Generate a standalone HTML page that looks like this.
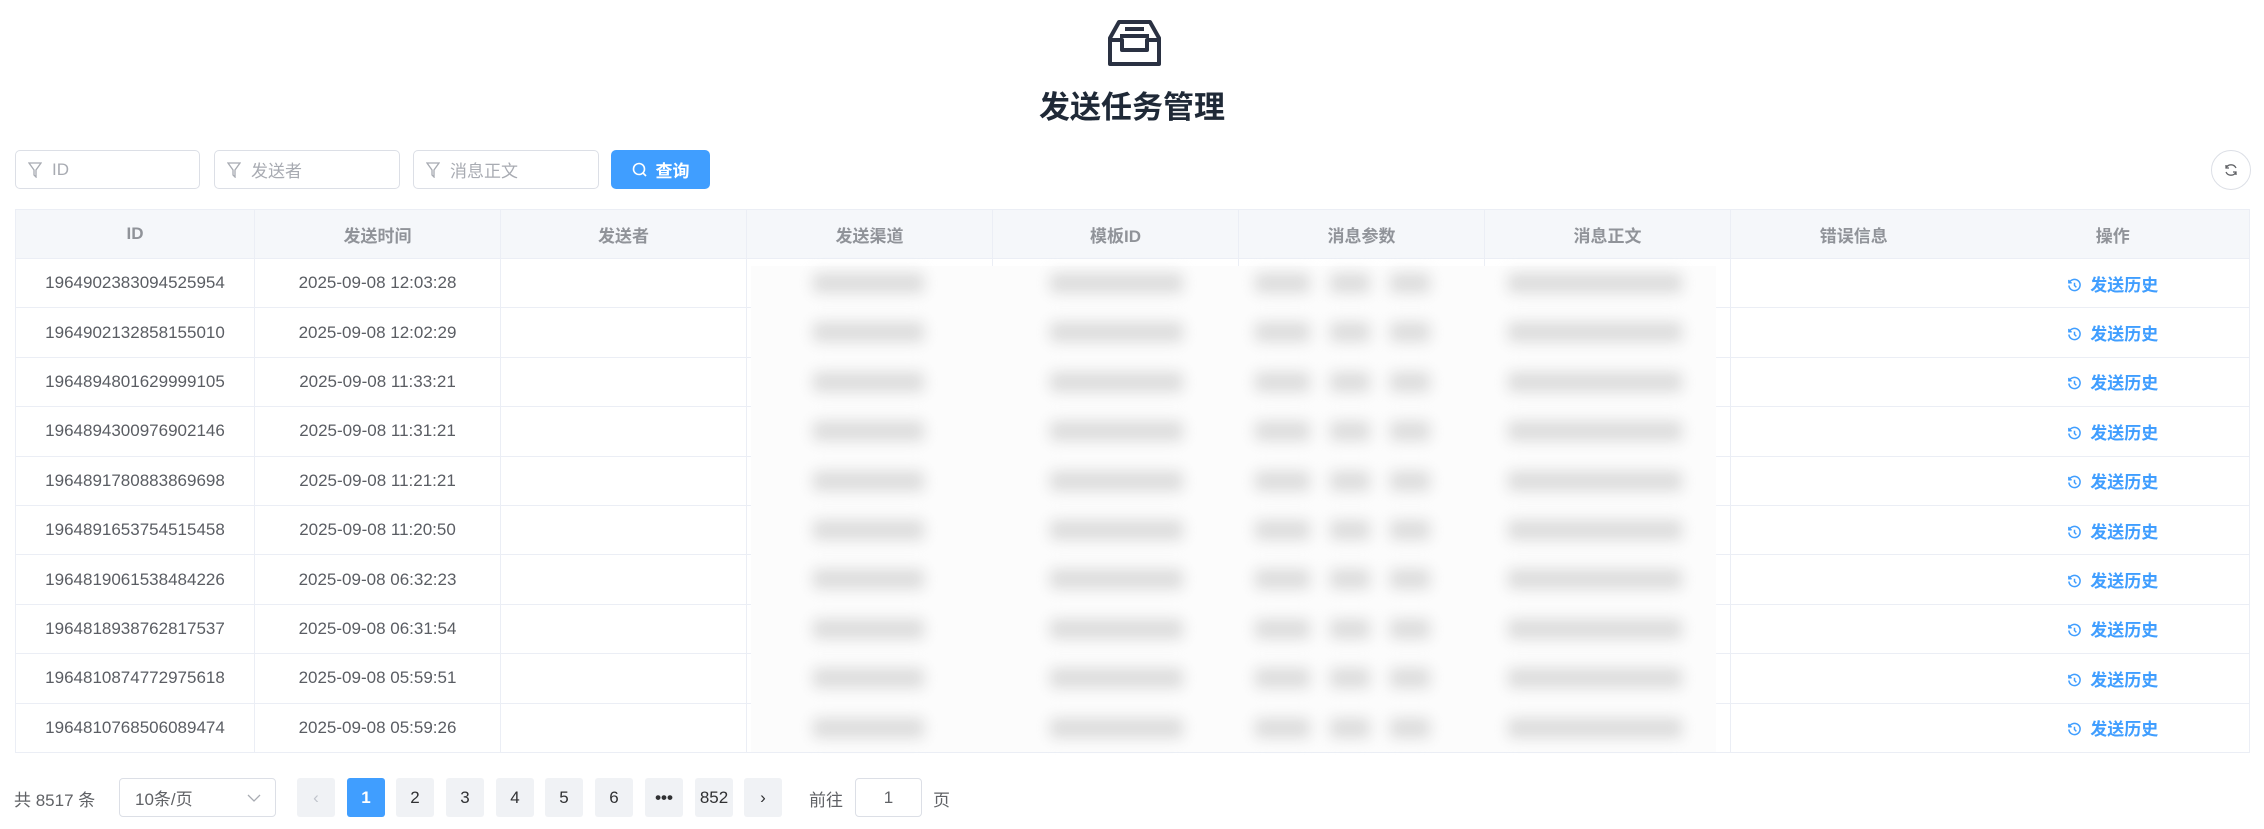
<!DOCTYPE html>
<html><head><meta charset="utf-8"><style>
*{box-sizing:border-box;margin:0;padding:0}
body{width:2264px;height:829px;background:#fff;font-family:"Liberation Sans","Noto Sans CJK SC",sans-serif;color:#606266;position:relative;overflow:hidden}
.abs{position:absolute}
.title{left:0;width:2264px;top:82px;text-align:center;font-size:31px;font-weight:bold;color:#1f2937}
.inp{top:150px;height:39px;border:1px solid #dcdfe6;border-radius:5px;font-size:17px;color:#a8abb2;display:flex;align-items:center;padding-left:12px}
.inp svg{margin-right:10px}
.btn{top:150px;left:611px;width:99px;height:39px;background:#409eff;border-radius:5px;color:#fff;font-size:17px;font-weight:bold;display:flex;align-items:center;justify-content:center}
table{position:absolute;left:15px;top:209px;border-collapse:collapse;table-layout:fixed;width:2234px}
td,th{height:49.4px;border:1px solid #ebeef5;text-align:center;font-size:17px;font-weight:normal;color:#5a5d63}
th{height:49px;background:#f5f7fa;color:#909399;font-weight:bold}
td.a{color:#409eff;border-left:none;font-weight:bold}
th.e,td.e{border-right:none}
th.a{border-left:none}
.blur{left:751px;top:266px;width:965px;height:486px;background:#fcfcfc}
.b{position:absolute;height:20px;background:#dcdcdc;filter:blur(7px);border-radius:4px}
.pg{top:778px;width:38px;height:39px;background:#f0f2f5;border-radius:3px;font-size:17px;color:#303133;display:flex;align-items:center;justify-content:center}
</style></head><body>
<svg class="abs" style="left:1108px;top:20px" width="53" height="46" viewBox="0 0 53 46" fill="none" stroke="#2a3142" stroke-width="4" stroke-linejoin="round"><path d="M11 2h31l9 16v26H2V18z"/><path d="M2 20h12v10h25V20h12"/><path d="M17 9h19M12 16h29"/></svg>
<div class="abs title">发送任务管理</div>
<div class="abs inp" style="left:15px;width:185px"><svg width="14" height="16" viewBox="0 0 14 16" fill="none" stroke="#a8abb2" stroke-width="1.3"><path d="M1 1h12L8 8v7l-2-2V8z"/></svg>ID</div>
<div class="abs inp" style="left:214px;width:186px"><svg width="14" height="16" viewBox="0 0 14 16" fill="none" stroke="#a8abb2" stroke-width="1.3"><path d="M1 1h12L8 8v7l-2-2V8z"/></svg>发送者</div>
<div class="abs inp" style="left:413px;width:186px"><svg width="14" height="16" viewBox="0 0 14 16" fill="none" stroke="#a8abb2" stroke-width="1.3"><path d="M1 1h12L8 8v7l-2-2V8z"/></svg>消息正文</div>
<div class="abs btn"><svg width="16" height="16" viewBox="0 0 16 16" fill="none" stroke="#fff" stroke-width="1.6" style="margin-right:8px"><circle cx="7" cy="7" r="5.5"/><path d="M11 11l3 3"/></svg>查询</div>
<div class="abs" style="left:2211px;top:150px;width:40px;height:40px;border:1px solid #dcdfe6;border-radius:50%;display:flex;align-items:center;justify-content:center"><svg width="14" height="14" viewBox="0 0 14 14" fill="none" stroke="#606266" stroke-width="1.3"><path d="M12 5A5.5 5.5 0 0 0 2 5M2 9a5.5 5.5 0 0 0 10 0M2 2v3h3M12 12V9H9"/></svg></div>
<table>
<colgroup><col style="width:239px"><col style="width:246px"><col style="width:246px"><col style="width:246px"><col style="width:246px"><col style="width:246px"><col style="width:246px"><col style="width:246px"><col style="width:273px"></colgroup>
<tr><th>ID</th><th>发送时间</th><th>发送者</th><th>发送渠道</th><th>模板ID</th><th>消息参数</th><th>消息正文</th><th class="e">错误信息</th><th class="a">操作</th></tr>
<tbody id="tb"></tbody>
</table>
<div class="abs blur"></div>
<div id="bl"></div>
<div class="abs" style="left:14px;top:786px;font-size:17px">共 8517 条</div>
<div class="abs" style="left:119px;top:778px;width:157px;height:39px;border:1px solid #dcdfe6;border-radius:4px;font-size:17px;display:flex;align-items:center;padding-left:15px">10条/页<svg style="position:absolute;right:14px" width="14" height="8" viewBox="0 0 14 8" fill="none" stroke="#a8abb2" stroke-width="1.3"><path d="M1 1l6 6 6-6"/></svg></div>
<div class="abs pg" style="left:297px;color:#c0c4cc">‹</div>
<div class="abs pg" style="left:347px;background:#409eff;color:#fff;font-weight:bold">1</div>
<div class="abs pg" style="left:396px">2</div>
<div class="abs pg" style="left:446px">3</div>
<div class="abs pg" style="left:496px">4</div>
<div class="abs pg" style="left:545px">5</div>
<div class="abs pg" style="left:595px">6</div>
<div class="abs pg" style="left:645px;font-weight:bold">•••</div>
<div class="abs pg" style="left:695px">852</div>
<div class="abs pg" style="left:744px">›</div>
<div class="abs" style="left:809px;top:786px;font-size:17px">前往</div>
<div class="abs" style="left:855px;top:778px;width:67px;height:39px;border:1px solid #dcdfe6;border-radius:4px;font-size:17px;display:flex;align-items:center;justify-content:center">1</div>
<div class="abs" style="left:933px;top:786px;font-size:17px">页</div>
<script>
var ids=["1964902383094525954","1964902132858155010","1964894801629999105","1964894300976902146","1964891780883869698","1964891653754515458","1964819061538484226","1964818938762817537","1964810874772975618","1964810768506089474"];
var ts=["12:03:28","12:02:29","11:33:21","11:31:21","11:21:21","11:20:50","06:32:23","06:31:54","05:59:51","05:59:26"];
var icon='<svg width="15" height="15" viewBox="0 0 16 16" fill="none" stroke="#409eff" stroke-width="1.6" style="vertical-align:-2px;margin-right:8px"><path d="M2.5 5A6 6 0 1 1 2 8"/><path d="M2 2v3h3M8 5v3l2 2"/></svg>';
var h="",b="";
for(var i=0;i<10;i++){h+='<tr><td>'+ids[i]+'</td><td>2025-09-08 '+ts[i]+'</td><td></td><td></td><td></td><td></td><td></td><td class="e"></td><td class="a">'+icon+'发送历史</td></tr>';
var y=258+i*49.4+15;
[[813,111],[1050,133],[1255,55],[1330,40],[1390,40],[1508,174]].forEach(function(r){b+='<div class="b" style="left:'+r[0]+'px;top:'+y+'px;width:'+r[1]+'px"></div>';});}
document.getElementById("tb").innerHTML=h;document.getElementById("bl").innerHTML=b;
</script>
</body></html>
